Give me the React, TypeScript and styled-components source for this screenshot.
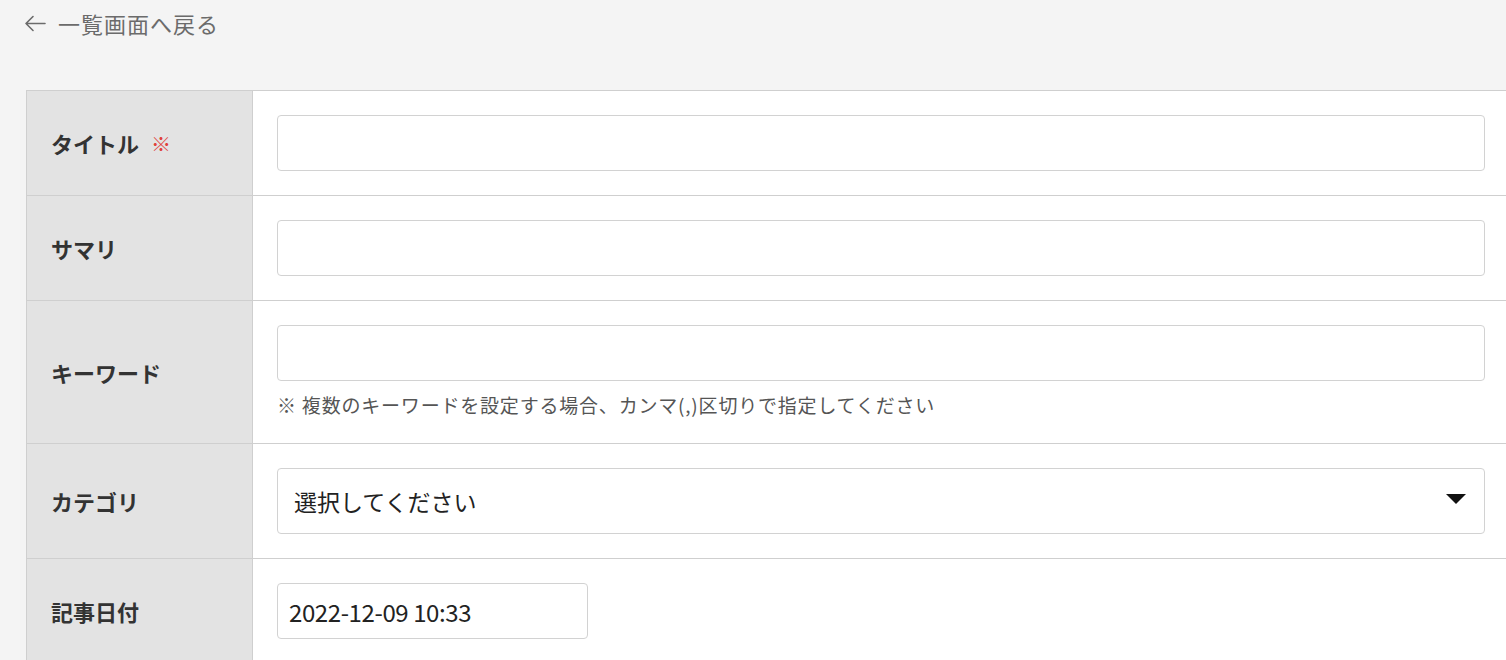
import React from "react";
import styled, { createGlobalStyle } from "styled-components";

const GlobalStyle = createGlobalStyle`
  html, body {
    margin: 0;
    padding: 0;
    background: #f4f4f4;
    overflow: hidden;
  }
  body {
    font-family: "Noto Sans CJK JP", "Noto Sans", sans-serif;
    color: #333;
  }
`;

const FIELDS: Array<{ label: string; required?: boolean; hint?: string }> = [
  { label: "タイトル", required: true },
  { label: "サマリ" },
  {
    label: "キーワード",
    hint: "※ 複数のキーワードを設定する場合、カンマ(,)区切りで指定してください",
  },
];

const App = () => {
  return (
    <Page>
      <GlobalStyle />
      <BackLink href="#">
        <svg width="22" height="17" viewBox="0 0 22 17" fill="none">
          <path
            d="M21 8.5H2M9 1.5L2 8.5L9 15.5"
            stroke="#6b6b6b"
            strokeWidth="1.6"
            strokeLinecap="round"
            strokeLinejoin="round"
          />
        </svg>
        <span>一覧画面へ戻る</span>
      </BackLink>

      <Table>
        {FIELDS.map(({ label, required, hint }) => (
          <Row key={label}>
            <Label>
              {label}
              {required && <Required>※</Required>}
            </Label>
            <Field>
              <TextInput type="text" />
              {hint && <Hint>{hint}</Hint>}
            </Field>
          </Row>
        ))}

        <Row>
          <Label>カテゴリ</Label>
          <Field>
            <Select>
              <span>選択してください</span>
              <Caret />
            </Select>
          </Field>
        </Row>

        <Row>
          <Label>記事日付</Label>
          <Field>
            <DateInput type="text" defaultValue="2022-12-09 10:33" />
          </Field>
        </Row>
      </Table>
    </Page>
  );
};

const Page = styled.div`
  width: 1508px;
  padding: 0 0 40px 26px;
  box-sizing: border-box;
`;

const BackLink = styled.a`
  display: flex;
  align-items: center;
  gap: 12px;
  height: 46px;
  margin-left: -2px;
  margin-bottom: 44px;
  color: #6b6b6b;
  font-size: 22px;
  letter-spacing: 1px;
  text-decoration: none;

  svg {
    flex-shrink: 0;
  }
`;

const Table = styled.div`
  border-top: 1px solid #cfcfcf;
  border-left: 1px solid #cfcfcf;
  background: #fff;
`;

const Row = styled.div`
  display: flex;
  border-bottom: 1px solid #cfcfcf;
`;

const Label = styled.div`
  width: 226px;
  flex-shrink: 0;
  display: flex;
  align-items: center;
  padding-left: 24px;
  box-sizing: border-box;
  background: #e3e3e3;
  border-right: 1px solid #cfcfcf;
  font-size: 22px;
  font-weight: 700;
  color: #333;
`;

const Required = styled.span`
  margin-left: 12px;
  color: #e0413a;
  font-size: 20px;
  font-weight: 700;
`;

const Field = styled.div`
  flex: 1;
  padding: 24px 23px 24px 24px;
`;

const TextInput = styled.input`
  display: block;
  width: 100%;
  height: 56px;
  box-sizing: border-box;
  border: 1px solid #d2d2d2;
  border-radius: 4px;
  background: #fff;
  padding: 0 14px;
  font: inherit;
  font-size: 22px;
  outline: none;
`;

const Hint = styled.p`
  margin: 10px 0 0;
  line-height: 28px;
  font-size: 19px;
  letter-spacing: 0.8px;
  color: #555;
`;

const Select = styled.div`
  display: flex;
  align-items: center;
  justify-content: space-between;
  height: 66px;
  box-sizing: border-box;
  border: 1px solid #d2d2d2;
  border-radius: 4px;
  padding: 0 18px 0 16px;
  font-size: 23px;
  color: #222;
`;

const Caret = styled.span`
  width: 0;
  height: 0;
  border-left: 10px solid transparent;
  border-right: 10px solid transparent;
  border-top: 10px solid #111;
  margin-top: -4px;
`;

const DateInput = styled(TextInput)`
  width: 311px;
  padding: 0 11px;
  font-size: 24px;
  letter-spacing: -0.4px;
  color: #222;
`;

export default App;
